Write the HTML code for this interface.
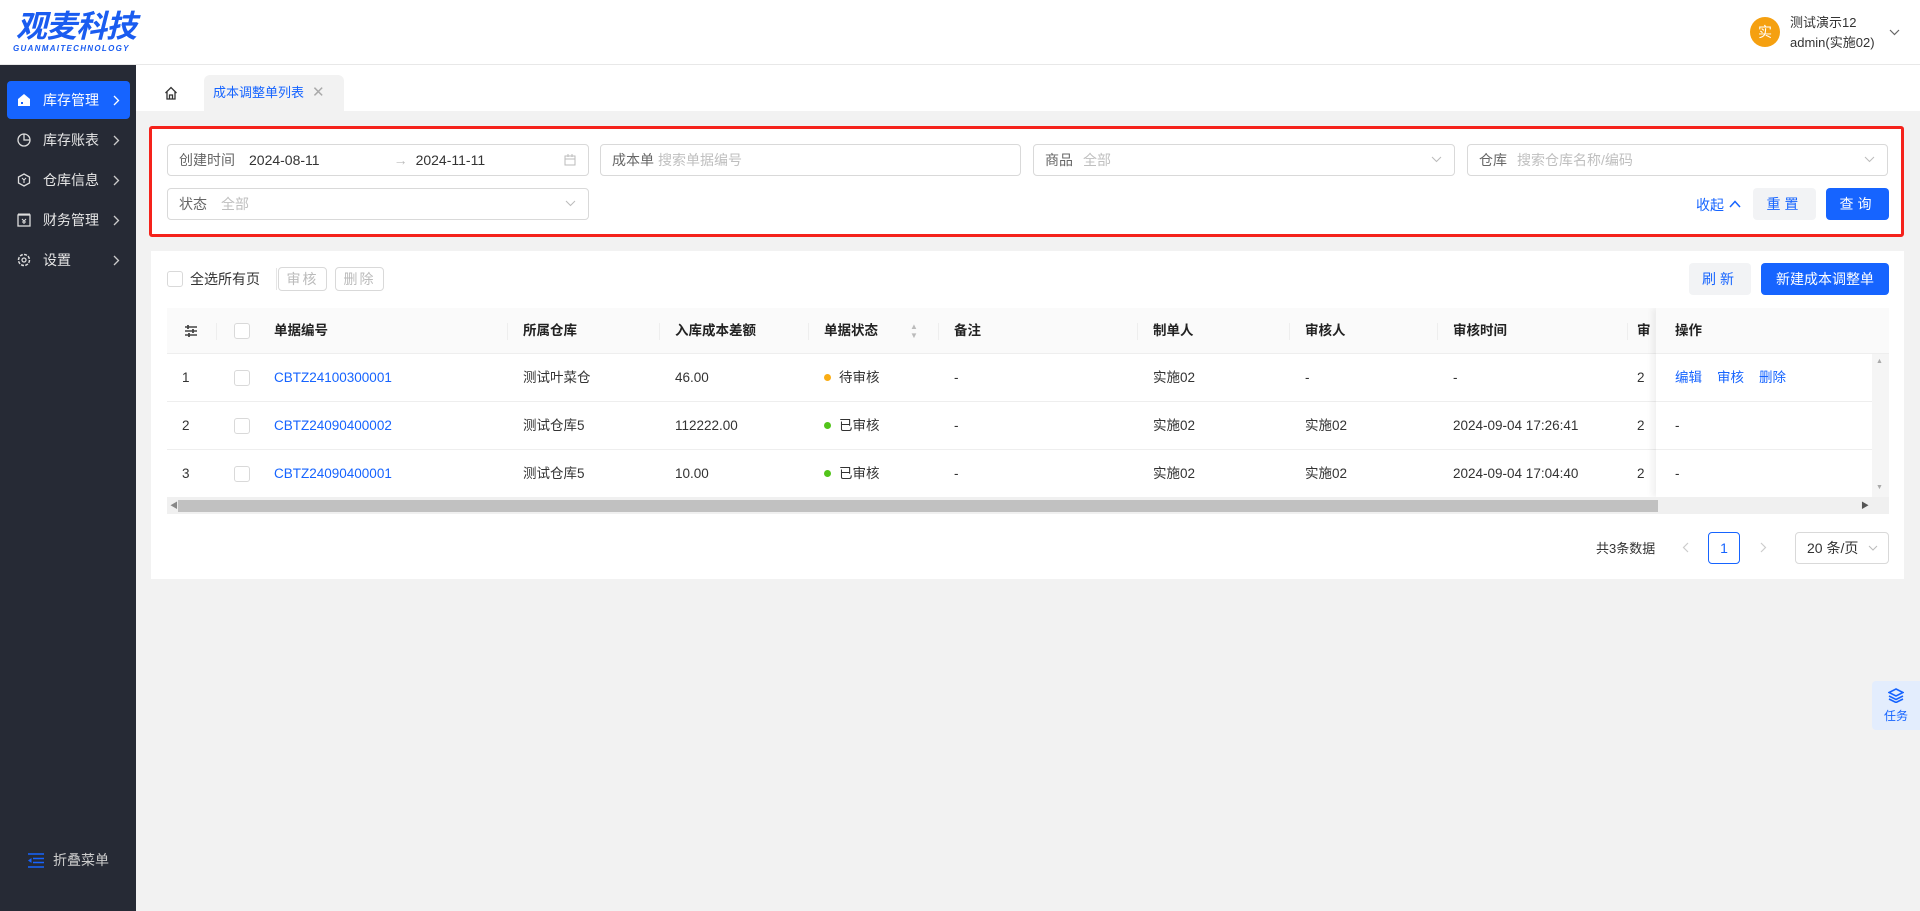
<!DOCTYPE html>
<html><head><meta charset="utf-8"><style>
*{box-sizing:border-box;margin:0;padding:0}
body{width:1920px;height:911px;overflow:hidden;background:#f2f2f2;font-family:"Liberation Sans","Noto Sans CJK SC",sans-serif;font-size:14px;color:#333;position:relative}
.a{position:absolute}
.hdr{left:0;top:0;width:1920px;height:65px;background:#fff;border-bottom:1px solid #e8e8e8}
.side{left:0;top:65px;width:136px;height:846px;background:#262a35}
.mi{position:absolute;left:7px;width:123px;height:38px;color:#e6e6e6;font-size:14px;line-height:38px;padding-left:36px}
.mi .ic{position:absolute;left:10px;top:12px;width:14px;height:14px}
.mi .ar{position:absolute;right:10px;top:14px}
.inp{position:absolute;height:32px;border:1px solid #d9d9d9;border-radius:4px;background:#fff;line-height:30px;padding-left:11px;font-size:14px}
.lbl{color:#666;margin-right:10px}
.ph{color:#bfbfbf}
.chev{position:absolute;right:12px;top:11px}
.btn{position:absolute;height:32px;line-height:32px;text-align:center;border-radius:4px;font-size:14px}
.th{position:absolute;top:0;height:45px;line-height:45px;font-weight:bold;color:#222;font-size:13.5px}
.td{position:absolute;line-height:47px;height:47px;font-size:13.5px}
.cb{position:absolute;width:16px;height:16px;border:1px solid #d9d9d9;border-radius:3px;background:#fff}
.lnk{color:#1664ff}
.dot{display:inline-block;width:7px;height:7px;border-radius:50%;margin-right:8px;vertical-align:1px}
</style></head><body>
<div class="a hdr">
  <div class="a" style="left:16px;top:10px;color:#1a5cf0;font-size:31px;font-weight:bold;font-style:italic;letter-spacing:-1px;line-height:34px">观麦科技</div>
  <div class="a" style="left:13px;top:44px;color:#1a5cf0;font-size:8px;font-style:italic;font-weight:bold;letter-spacing:1.3px">GUANMAITECHNOLOGY</div>
  <div class="a" style="left:1750px;top:17px;width:30px;height:30px;border-radius:50%;background:#f5a010;color:#fff;text-align:center;line-height:30px;font-size:14px">实</div>
  <div class="a" style="left:1790px;top:13px;font-size:13px;line-height:20px;color:#333">测试演示12<br>admin(实施02)</div>
  <svg class="a" style="left:1889px;top:29px" width="11" height="7" viewBox="0 0 11 7"><path d="M1 1l4.5 4.5L10 1" fill="none" stroke="#666" stroke-width="1.2"/></svg>
</div>
<div class="a side">
  <div class="mi" style="top:16px;background:#1664ff;border-radius:4px;color:#fff"><svg class="ic" viewBox="0 0 14 14"><path d="M1 6L7 1l6 5v7H1z" fill="#fff"/><rect x="4" y="9" width="2" height="2" fill="#1664ff"/></svg>库存管理<svg class="ar" width="7" height="11" viewBox="0 0 7 11"><path d="M1 1l4.5 4.5L1 10" fill="none" stroke="#fff" stroke-width="1.3"/></svg></div>
  <div class="mi" style="top:56px"><svg class="ic" viewBox="0 0 14 14"><circle cx="7" cy="7" r="6" fill="none" stroke="#ddd" stroke-width="1.3"/><path d="M7 1v6h6" fill="none" stroke="#ddd" stroke-width="1.3"/></svg>库存账表<svg class="ar" width="7" height="11" viewBox="0 0 7 11"><path d="M1 1l4.5 4.5L1 10" fill="none" stroke="#ccc" stroke-width="1.3"/></svg></div>
  <div class="mi" style="top:96px"><svg class="ic" viewBox="0 0 14 14"><path d="M7 1l5.5 3v6L7 13 1.5 10V4z" fill="none" stroke="#ddd" stroke-width="1.3"/><path d="M5 5l2 2 2-2M7 7v3" fill="none" stroke="#ddd" stroke-width="1.1"/></svg>仓库信息<svg class="ar" width="7" height="11" viewBox="0 0 7 11"><path d="M1 1l4.5 4.5L1 10" fill="none" stroke="#ccc" stroke-width="1.3"/></svg></div>
  <div class="mi" style="top:136px"><svg class="ic" viewBox="0 0 14 14"><rect x="1" y="2" width="12" height="11" fill="none" stroke="#ddd" stroke-width="1.3"/><path d="M1 1h12M5 6l2 2 2-2M7 8v3M5 9h4" stroke="#ddd" stroke-width="1.1" fill="none"/></svg>财务管理<svg class="ar" width="7" height="11" viewBox="0 0 7 11"><path d="M1 1l4.5 4.5L1 10" fill="none" stroke="#ccc" stroke-width="1.3"/></svg></div>
  <div class="mi" style="top:176px"><svg class="ic" viewBox="0 0 14 14"><circle cx="7" cy="7" r="5.5" fill="none" stroke="#ddd" stroke-width="1.5" stroke-dasharray="3 1.3"/><circle cx="7" cy="7" r="2" fill="none" stroke="#ddd" stroke-width="1.3"/></svg>设置<svg class="ar" width="7" height="11" viewBox="0 0 7 11"><path d="M1 1l4.5 4.5L1 10" fill="none" stroke="#ccc" stroke-width="1.3"/></svg></div>
  <svg class="a" style="left:28px;top:788px" width="16" height="15" viewBox="0 0 16 15"><path d="M0 1h16M5 5.5h11M5 9.5h11M0 14h16" stroke="#1664ff" stroke-width="1.6"/><path d="M0 7.5L3.5 5v5z" fill="#1664ff"/></svg>
  <div class="a" style="left:53px;top:785px;color:#ccc;font-size:14px">折叠菜单</div>
</div>
<div class="a" style="left:136px;top:65px;width:1784px;height:46px;background:#fff"></div>
<svg class="a" style="left:164px;top:86px" width="14" height="14" viewBox="0 0 14 14"><path d="M1.5 7L7 1.5 12.5 7M3 6v7h8V6M5.5 13V9h3v4" fill="none" stroke="#333" stroke-width="1.3"/></svg>
<div class="a" style="left:204px;top:75px;width:140px;height:36px;background:#f2f2f2;border-radius:6px 6px 0 0;line-height:36px;padding-left:9px;color:#1664ff;font-size:13px">成本调整单列表<span style="color:#aaa;margin-left:8px;font-size:15px">✕</span></div>
<div class="a" style="left:149px;top:126px;width:1755px;height:111px;border:3px solid #f5221b;border-radius:3px;background:#fff"></div>
<div class="inp" style="left:167px;top:144px;width:422px"><span class="lbl">创建时间</span><span style="margin-left:4px">2024-08-11</span><span style="color:#bbb;margin-left:74px">→</span><span style="margin-left:8px">2024-11-11</span>
<svg class="chev" style="top:9px" width="12" height="12" viewBox="0 0 12 12"><rect x="1" y="2" width="10" height="9" fill="none" stroke="#bbb"/><path d="M1 5h10M4 0v3M8 0v3" stroke="#bbb"/></svg></div>
<div class="inp" style="left:600px;top:144px;width:421px"><span class="lbl" style="margin-right:4px">成本单</span><span class="ph">搜索单据编号</span></div>
<div class="inp" style="left:1033px;top:144px;width:422px"><span class="lbl">商品</span><span class="ph">全部</span><svg class="chev" width="11" height="7" viewBox="0 0 11 7"><path d="M1 1l4.5 4.5L10 1" fill="none" stroke="#bbb"/></svg></div>
<div class="inp" style="left:1467px;top:144px;width:421px"><span class="lbl">仓库</span><span class="ph">搜索仓库名称/编码</span><svg class="chev" width="11" height="7" viewBox="0 0 11 7"><path d="M1 1l4.5 4.5L10 1" fill="none" stroke="#bbb"/></svg></div>
<div class="inp" style="left:167px;top:188px;width:422px"><span class="lbl" style="margin-right:14px">状态</span><span class="ph">全部</span><svg class="chev" width="11" height="7" viewBox="0 0 11 7"><path d="M1 1l4.5 4.5L10 1" fill="none" stroke="#bbb"/></svg></div>
<div class="a" style="left:1696px;top:195px;color:#1664ff;font-size:14px">收起</div>
<svg class="a" style="left:1729px;top:200px" width="12" height="8" viewBox="0 0 12 8"><path d="M1 7l5-5.5L11 7" fill="none" stroke="#1664ff" stroke-width="1.5"/></svg>
<div class="btn" style="left:1753px;top:188px;width:63px;background:#f2f3f5;color:#1664ff;letter-spacing:4px">重置</div>
<div class="btn" style="left:1826px;top:188px;width:63px;background:#1664ff;color:#fff;letter-spacing:4px">查询</div>
<div class="a" style="left:151px;top:251px;width:1753px;height:328px;background:#fff"></div>
<div class="cb" style="left:167px;top:271px"></div>
<div class="a" style="left:190px;top:269px;font-size:14px">全选所有页</div>
<div class="a" style="left:276px;top:268px;width:1px;height:22px;background:#e5e5e5"></div>
<div class="btn" style="left:278px;top:267px;width:49px;height:24px;line-height:22px;border:1px solid #d9d9d9;color:#bbb;letter-spacing:2px">审核</div>
<div class="btn" style="left:335px;top:267px;width:49px;height:24px;line-height:22px;border:1px solid #d9d9d9;color:#bbb;letter-spacing:2px">删除</div>
<div class="btn" style="left:1689px;top:263px;width:62px;height:32px;background:#f2f3f5;color:#1664ff;letter-spacing:4px">刷新</div>
<div class="btn" style="left:1761px;top:263px;width:128px;height:32px;background:#1664ff;color:#fff">新建成本调整单</div>
<div class="a" style="left:167px;top:308px;width:1722px;height:206px;overflow:hidden">
  <div class="a" style="left:0;top:0;width:1722px;height:46px;background:#fafafa;border-bottom:1px solid #eee"></div>
  <svg class="a" style="left:17px;top:16px" width="14" height="14" viewBox="0 0 14 14"><path d="M1 3h12M1 7h12M1 11h12" stroke="#444" stroke-width="1.4"/><path d="M4 1v4M9 5v4M5 9v4" stroke="#444" stroke-width="1.8"/></svg>
  <div class="a" style="left:49px;top:15px;width:1px;height:17px;background:#eee"></div>
  <div class="cb" style="left:67px;top:15px"></div>
  <div class="th" style="left:107px">单据编号</div>
  <div class="a" style="left:340px;top:15px;width:1px;height:17px;background:#eee"></div>
  <div class="th" style="left:356px">所属仓库</div>
  <div class="a" style="left:492px;top:15px;width:1px;height:17px;background:#eee"></div>
  <div class="th" style="left:508px">入库成本差额</div>
  <div class="a" style="left:641px;top:15px;width:1px;height:17px;background:#eee"></div>
  <div class="th" style="left:657px">单据状态</div>
  <div class="a" style="left:743px;top:14px;color:#bbb;font-size:8px;line-height:9px">▲<br>▼</div>
  <div class="a" style="left:771px;top:15px;width:1px;height:17px;background:#eee"></div>
  <div class="th" style="left:787px">备注</div>
  <div class="a" style="left:970px;top:15px;width:1px;height:17px;background:#eee"></div>
  <div class="th" style="left:986px">制单人</div>
  <div class="a" style="left:1122px;top:15px;width:1px;height:17px;background:#eee"></div>
  <div class="th" style="left:1138px">审核人</div>
  <div class="a" style="left:1270px;top:15px;width:1px;height:17px;background:#eee"></div>
  <div class="th" style="left:1286px">审核时间</div>
  <div class="a" style="left:1460px;top:15px;width:1px;height:17px;background:#eee"></div>
  <div class="th" style="left:1470px">审</div>
  <div class="a" style="left:0;top:93px;width:1722px;height:1px;background:#eee"></div>
  <div class="a" style="left:0;top:141px;width:1722px;height:1px;background:#eee"></div>
  <div class="td" style="left:15px;top:46px">1</div><div class="cb" style="left:67px;top:62px"></div>
  <div class="td lnk" style="left:107px;top:46px">CBTZ24100300001</div><div class="td" style="left:356px;top:46px">测试叶菜仓</div><div class="td" style="left:508px;top:46px">46.00</div>
  <div class="td" style="left:657px;top:46px"><span class="dot" style="background:#faad14"></span>待审核</div><div class="td" style="left:787px;top:46px">-</div><div class="td" style="left:986px;top:46px">实施02</div><div class="td" style="left:1138px;top:46px">-</div><div class="td" style="left:1286px;top:46px">-</div><div class="td" style="left:1470px;top:46px">2</div>
  <div class="td" style="left:15px;top:94px">2</div><div class="cb" style="left:67px;top:110px"></div>
  <div class="td lnk" style="left:107px;top:94px">CBTZ24090400002</div><div class="td" style="left:356px;top:94px">测试仓库5</div><div class="td" style="left:508px;top:94px">112222.00</div>
  <div class="td" style="left:657px;top:94px"><span class="dot" style="background:#52c41a"></span>已审核</div><div class="td" style="left:787px;top:94px">-</div><div class="td" style="left:986px;top:94px">实施02</div><div class="td" style="left:1138px;top:94px">实施02</div><div class="td" style="left:1286px;top:94px">2024-09-04 17:26:41</div><div class="td" style="left:1470px;top:94px">2</div>
  <div class="td" style="left:15px;top:142px">3</div><div class="cb" style="left:67px;top:158px"></div>
  <div class="td lnk" style="left:107px;top:142px">CBTZ24090400001</div><div class="td" style="left:356px;top:142px">测试仓库5</div><div class="td" style="left:508px;top:142px">10.00</div>
  <div class="td" style="left:657px;top:142px"><span class="dot" style="background:#52c41a"></span>已审核</div><div class="td" style="left:787px;top:142px">-</div><div class="td" style="left:986px;top:142px">实施02</div><div class="td" style="left:1138px;top:142px">实施02</div><div class="td" style="left:1286px;top:142px">2024-09-04 17:04:40</div><div class="td" style="left:1470px;top:142px">2</div>
  <div class="a" style="left:1489px;top:0;width:233px;height:189px;background:#fff;box-shadow:-4px 0 6px rgba(0,0,0,0.06)"></div>
  <div class="a" style="left:1489px;top:0;width:233px;height:46px;background:#fafafa;border-bottom:1px solid #eee"></div>
  <div class="th" style="left:1508px">操作</div>
  <div class="a" style="left:1489px;top:93px;width:216px;height:1px;background:#eee"></div>
  <div class="a" style="left:1489px;top:141px;width:216px;height:1px;background:#eee"></div>
  <div class="td lnk" style="left:1508px;top:46px">编辑<span style="margin-left:15px">审核</span><span style="margin-left:15px">删除</span></div>
  <div class="td" style="left:1508px;top:94px">-</div>
  <div class="td" style="left:1508px;top:142px">-</div>
  <div class="a" style="left:1705px;top:46px;width:17px;height:143px;background:#f5f5f5"></div>
  <div class="a" style="left:1709px;top:50px;color:#aaa;font-size:7px">▲</div>
  <div class="a" style="left:1709px;top:176px;color:#aaa;font-size:7px">▼</div>
  <div class="a" style="left:0;top:189px;width:1722px;height:17px;background:#f0f0f0"></div>
  <div class="a" style="left:11px;top:192px;width:1480px;height:12px;background:#c1c1c1"></div>
  <div class="a" style="left:3px;top:192px;color:#888;font-size:8px">◀</div>
  <div class="a" style="left:1694px;top:192px;color:#555;font-size:8px">▶</div>
</div>
<div class="a" style="left:1596px;top:538px;font-size:13px;color:#333">共3条数据</div>
<svg class="a" style="left:1682px;top:542px" width="7" height="11" viewBox="0 0 7 11"><path d="M6 1L1.5 5.5 6 10" fill="none" stroke="#ccc" stroke-width="1.2"/></svg>
<div class="a" style="left:1708px;top:532px;width:32px;height:32px;border:1px solid #1664ff;border-radius:4px;color:#1664ff;text-align:center;line-height:30px">1</div>
<svg class="a" style="left:1760px;top:542px" width="7" height="11" viewBox="0 0 7 11"><path d="M1 1l4.5 4.5L1 10" fill="none" stroke="#ccc" stroke-width="1.2"/></svg>
<div class="a" style="left:1795px;top:532px;width:94px;height:32px;border:1px solid #d9d9d9;border-radius:4px;line-height:30px;padding-left:11px">20 条/页<svg style="position:absolute;right:10px;top:12px" width="10" height="6" viewBox="0 0 10 6"><path d="M1 1l4 4 4-4" fill="none" stroke="#bbb"/></svg></div>
<div class="a" style="left:1872px;top:681px;width:48px;height:49px;background:#e3edfd;border-radius:4px 0 0 4px"></div>
<svg class="a" style="left:1888px;top:688px" width="16" height="15" viewBox="0 0 16 15"><path d="M8 1l7 3.5L8 8 1 4.5z" fill="none" stroke="#1664ff" stroke-width="1.6"/><path d="M1 8l7 3.5L15 8M1 11l7 3.5 7-3.5" fill="none" stroke="#1664ff" stroke-width="1.6"/></svg>
<div class="a" style="left:1884px;top:707px;color:#1664ff;font-size:12px">任务</div>
</body></html>
